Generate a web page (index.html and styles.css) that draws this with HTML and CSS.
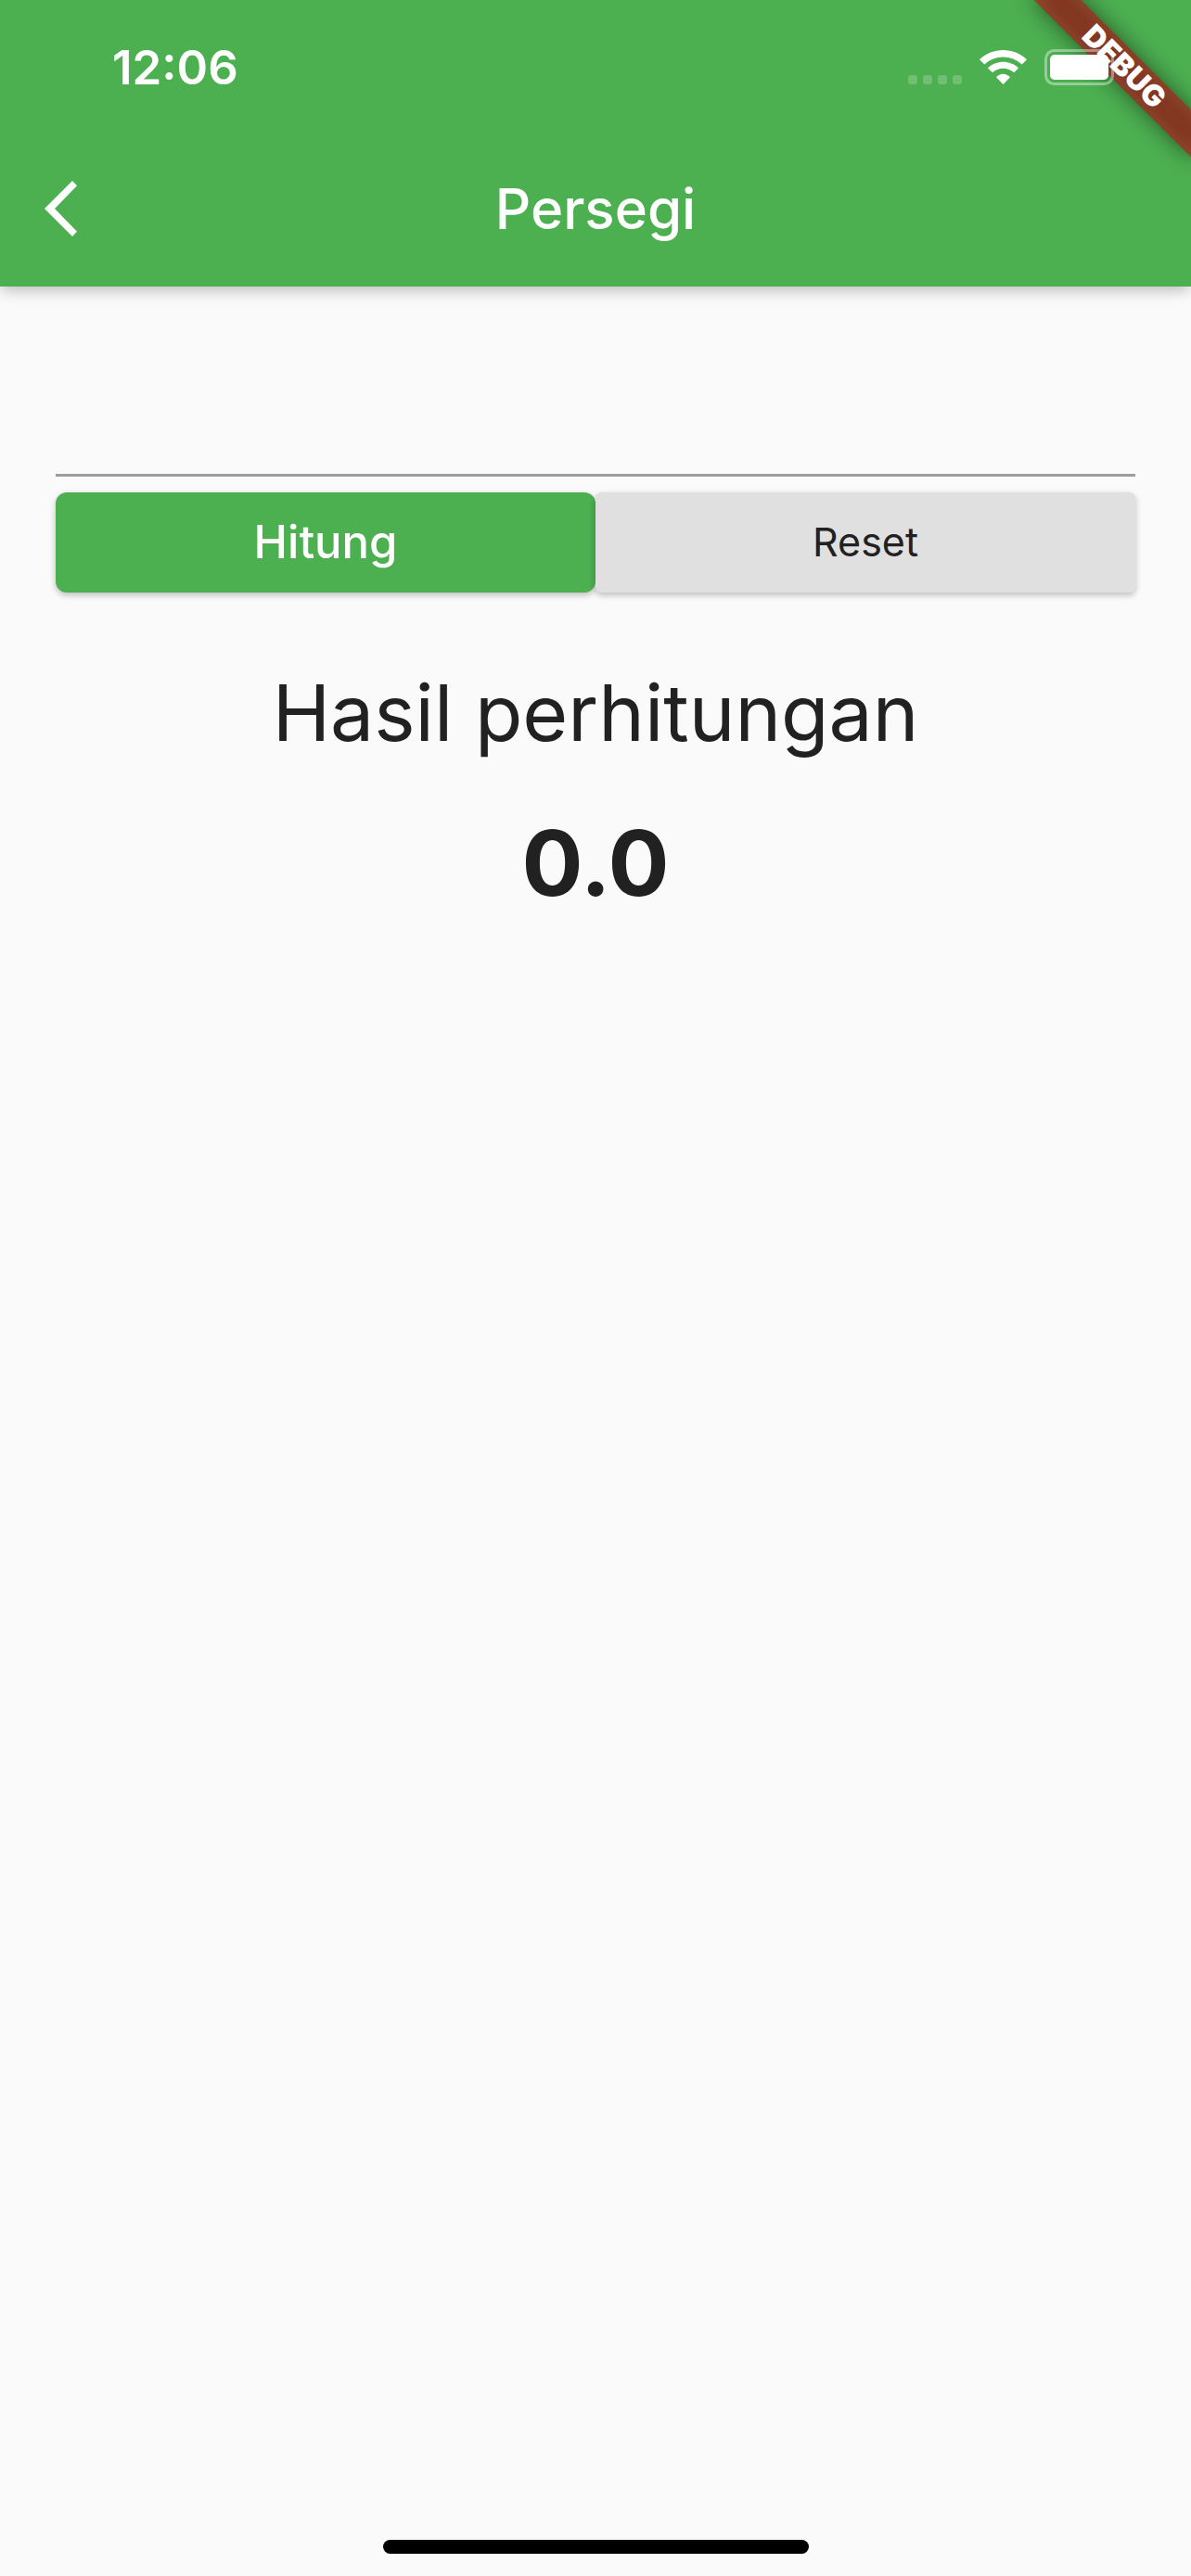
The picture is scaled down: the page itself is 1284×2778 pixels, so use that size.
FILE: index.html
```html
<!DOCTYPE html>
<html lang="id">
<head>
<meta charset="utf-8">
<meta name="viewport" content="width=device-width, initial-scale=1">
<title>Persegi</title>
<link rel="stylesheet" href="styles.css">
</head>
<body>
<div class="app">
  <header class="app-bar">
    <div class="status-bar">
      <time class="clock">12:06</time>
      <div class="indicators">
        <svg class="signal" width="58" height="10" viewBox="0 0 58 10" aria-hidden="true">
          <rect width="10" height="10" rx="3"/>
          <rect x="16" width="10" height="10" rx="3"/>
          <rect x="32" width="10" height="10" rx="3"/>
          <rect x="48" width="10" height="10" rx="3"/>
        </svg>
        <svg width="51" height="37" viewBox="0 0 51 37" aria-hidden="true">
          <path d="M5.300 15.500 0 10.300C14.200-3.400 36.800-3.400 51 10.300l-5.300 5.200C34.400 4.800 16.600 4.800 5.300 15.500z"/>
          <path d="M14 24.300 8.900 19.400c9.200-8.800 24-8.800 33.200 0L37 24.300c-6.400-6-16.600-6-23 0z"/>
          <path d="M25.500 37 18 29.300c4.100-4.900 10.900-4.900 15 0z"/>
        </svg>
        <svg width="82" height="39" viewBox="0 0 82 39" aria-hidden="true">
          <rect class="battery-case" x="1.500" y="1.500" width="72" height="36" rx="9"/>
          <rect x="6" y="6" width="63" height="27" rx="5"/>
        </svg>
      </div>
    </div>
    <div class="toolbar">
      <button class="back" type="button" aria-label="Kembali">
        <svg width="35" height="60" viewBox="0 0 35 60" aria-hidden="true">
          <path d="M30 0 35 5.300 11 30 35 54.700 30 60 0 30z"/>
        </svg>
      </button>
      <h1 class="title">Persegi</h1>
    </div>
  </header>
  <main class="content">
    <form class="form">
      <input class="field" type="text" inputmode="decimal" aria-label="Sisi">
      <div class="actions">
        <button class="btn btn-primary" type="button">Hitung</button>
        <button class="btn btn-plain" type="reset">Reset</button>
      </div>
    </form>
    <p class="result-label">Hasil perhitungan</p>
    <output class="result">0.0</output>
  </main>
  <div class="home-indicator"></div>
  <svg class="banner" width="190" height="190" viewBox="0 0 190 190">
    <defs>
      <filter id="soft" x="-50%" y="-200%" width="200%" height="500%"><feGaussianBlur stdDeviation="12"/></filter>
    </defs>
    <g transform="translate(118 72) rotate(45)">
      <rect class="banner-shadow" x="-120" y="-18" width="240" height="36" filter="url(#soft)"/>
      <rect class="banner-strip" x="-120" y="-18" width="240" height="36"/>
      <text class="banner-text" x="0" y="11">DEBUG</text>
    </g>
  </svg>
</div>
</body>
</html>
```
FILE: styles.css
```css
* {
  box-sizing: border-box;
}

body {
  margin: 0;
  background: #fafafa;
  color: #212121;
  font-family: Inter, "Liberation Sans", sans-serif;
}

.app {
  position: relative;
  display: flex;
  flex-direction: column;
  min-height: 100vh;
  overflow: hidden;
}

.app-bar {
  background: #4caf50;
  color: #fff;
  box-shadow: 0 6px 14px -3px rgba(0, 0, 0, .16), 0 6px 16px rgba(0, 0, 0, .1);
}

.status-bar {
  display: flex;
  justify-content: space-between;
  align-items: center;
  height: 141px;
  padding: 4px 76px 0 121px;
}

.clock {
  font-size: 51px;
  line-height: 60px;
  font-weight: 600;
}

/* System indicators stay above the debug banner. */
.indicators {
  position: relative;
  z-index: 2;
  display: flex;
  align-items: center;
  gap: 19px;
  fill: #fff;
}

.signal {
  margin-top: 26px;
  opacity: .2;
}

.battery-case {
  fill: none;
  stroke: #fff;
  stroke-opacity: .4;
  stroke-width: 3;
}

.toolbar {
  display: grid;
  grid-template-columns: 168px 1fr 168px;
  align-items: center;
  height: 168px;
}

.back {
  display: flex;
  padding: 24px 48px;
  border: 0;
  background: none;
  fill: #fff;
}

.title {
  margin: 0;
  text-align: center;
  font-size: 60px;
  line-height: 72px;
  font-weight: 500;
}

.content {
  flex: 1;
  padding: 60px;
  text-align: center;
}

.form {
  display: flex;
  flex-direction: column;
  gap: 17px;
}

.field {
  width: 100%;
  height: 145px;
  padding: 36px 0;
  border: 0;
  border-bottom: 3px solid #9c9c9c;
  background: none;
  color: inherit;
  font: inherit;
  font-size: 48px;
  outline: 0;
}

.actions {
  display: grid;
  grid-template-columns: 1fr 1fr;
}

.btn {
  height: 108px;
  padding: 0 0 2px;
  border: 0;
  font-family: inherit;
  box-shadow: 0 3px 6px rgba(0, 0, 0, .2), 0 2px 10px rgba(0, 0, 0, .06);
}

.btn-primary {
  border-radius: 12px;
  background: #4caf50;
  color: #fff;
  font-size: 49px;
  font-weight: 500;
}

.btn-plain {
  border-radius: 6px;
  background: #e0e0e0;
  color: #212121;
  font-size: 43px;
}

.result-label {
  margin: 78px 0 0;
  font-size: 84px;
  line-height: 104px;
}

.result {
  display: block;
  margin-top: 50px;
  font-size: 98px;
  line-height: 120px;
  font-weight: 700;
}

.home-indicator {
  align-self: center;
  width: 459px;
  max-width: 60%;
  height: 15px;
  margin-bottom: 24px;
  border-radius: 8px;
  background: #000;
}

.banner {
  position: absolute;
  top: 0;
  right: 0;
  z-index: 1;
  pointer-events: none;
}

.banner-shadow {
  fill: #000;
  fill-opacity: .5;
}

.banner-strip {
  fill: #b71c1c;
  fill-opacity: .63;
}

.banner-text {
  fill: #fff;
  font-size: 32px;
  font-weight: 900;
  text-anchor: middle;
}
```
